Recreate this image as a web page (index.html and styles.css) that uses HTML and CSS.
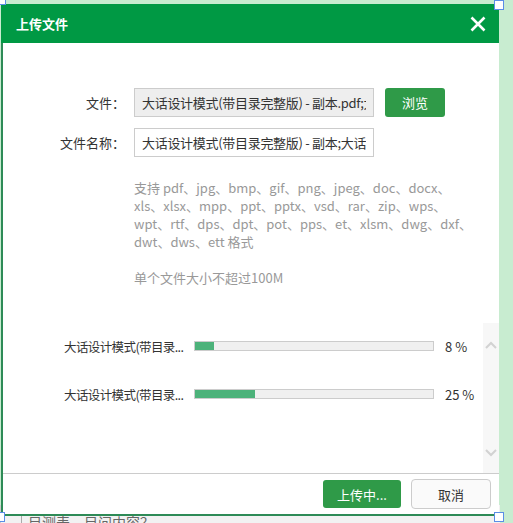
FILE: index.html
```html
<!DOCTYPE html>
<html lang="zh-CN">
<head>
    <meta charset="UTF-8">
    <meta name="viewport" content="width=device-width, initial-scale=1.0">
    <title>上传文件</title>
    <link rel="stylesheet" href="styles.css">
</head>
<body>

    <div class="under">
        <span class="under-text">目测表、目问内容？</span>
    </div>

    <div class="dialog">
        <div class="dialog-head">
            <span class="dialog-title">上传文件</span>
            <svg class="close" width="16" height="16" viewBox="0 0 16 16">
                <path d="M1.5 1.5 L14.5 14.5 M14.5 1.5 L1.5 14.5" stroke="#fff" stroke-width="2.6" fill="none"/>
            </svg>
        </div>

        <div class="dialog-body">
            <div class="form-row">
                <label class="form-label">文件：</label>
                <input class="field field-file" type="text" value="大话设计模式(带目录完整版) - 副本.pdf;大话设计模式(带目录完整版).pdf" readonly>
                <button class="btn btn-green btn-browse">浏览</button>
            </div>
            <div class="form-row">
                <label class="form-label">文件名称：</label>
                <input class="field" type="text" value="大话设计模式(带目录完整版) - 副本;大话设计模式(带目录完整版)">
            </div>

            <div class="help">
                <p>支持 pdf、jpg、bmp、gif、png、jpeg、doc、docx、<br>xls、xlsx、mpp、ppt、pptx、vsd、rar、zip、wps、<br>wpt、rtf、dps、dpt、pot、pps、et、xlsm、dwg、dxf、<br>dwt、dws、ett 格式</p>
                <p class="limit">单个文件大小不超过100M</p>
            </div>

            <div class="upload-list">
                <div class="upload-items">
                    <div class="upload-item">
                        <span class="upload-name">大话设计模式(带目录...</span>
                        <div class="bar"><div class="bar-fill" style="width: 8%"></div></div>
                        <span class="upload-pct">8 %</span>
                    </div>
                    <div class="upload-item">
                        <span class="upload-name">大话设计模式(带目录...</span>
                        <div class="bar"><div class="bar-fill" style="width: 25%"></div></div>
                        <span class="upload-pct">25 %</span>
                    </div>
                </div>
                <div class="scrollbar">
                    <svg width="12" height="8" viewBox="0 0 12 8">
                        <path d="M1 7 L6 2 L11 7" stroke="#d2d2d2" stroke-width="2" fill="none"/>
                    </svg>
                    <svg width="12" height="8" viewBox="0 0 12 8">
                        <path d="M1 1 L6 6 L11 1" stroke="#d2d2d2" stroke-width="2" fill="none"/>
                    </svg>
                </div>
            </div>
        </div>

        <div class="dialog-foot">
            <button class="btn btn-green btn-upload">上传中...</button>
            <button class="btn btn-cancel">取消</button>
        </div>

        <span class="handle handle-tl"></span>
        <span class="handle handle-tr"></span>
        <span class="handle handle-bl"></span>
        <span class="handle handle-br"></span>
    </div>

</body>
</html>
```

FILE: styles.css
```css
body {
    margin: 0;
    width: 513px;
    height: 523px;
    overflow: hidden;
    position: relative;
    background-color: #c8ecd0;
    font-family: "Noto Sans CJK SC", "Liberation Sans", sans-serif;
    font-size: 13px;
    color: #333;
}
.under {
    position: absolute;
    left: 0;
    top: 505px;
    width: 499px;
    height: 18px;
    background-color: #f2f2f2;
    border-left: 1px solid #ccc;
}
.under-text {
    position: absolute;
    left: 20px;
    top: 8px;
    font-size: 14px;
    color: #666;
    line-height: 18px;
    border-left: 1px solid #aaa;
    padding-left: 6px;
}
.dialog {
    position: absolute;
    left: 1px;
    top: 4px;
    width: 496px;
    height: 510px;
    background-color: #fff;
    border-left: 2px solid #2e8b57;
    border-bottom: 2px solid #2e8b57;
    display: flex;
    flex-direction: column;
}
.dialog-head {
    height: 39px;
    margin-left: -2px;
    background-color: #009944;
    display: flex;
    align-items: center;
    justify-content: space-between;
    padding: 0 13px 0 15px;
}
.dialog-title {
    color: #fff;
    font-weight: bold;
    font-size: 13px;
}
.close {
    display: block;
}
.dialog-body {
    flex: 1;
    display: flex;
    flex-direction: column;
    padding-top: 45px;
}
.form-row {
    display: flex;
    align-items: center;
    margin-bottom: 11px;
}
.form-label {
    width: 122px;
    text-align: right;
    margin-right: 9px;
    color: #333;
}
.field {
    box-sizing: border-box;
    width: 240px;
    height: 29px;
    border: 1px solid #ccc;
    padding: 0 7px;
    font-family: inherit;
    font-size: 13px;
    letter-spacing: -0.3px;
    color: #333;
    background-color: #fff;
    outline: none;
}
.field-file {
    background-color: #eee;
}
.btn {
    box-sizing: border-box;
    font-family: inherit;
    font-size: 13px;
    border-radius: 3px;
    cursor: pointer;
}
.btn-green {
    background-color: #2f9a48;
    color: #fff;
    border: none;
}
.btn-browse {
    width: 60px;
    height: 29px;
    margin-left: 11px;
}
.help {
    margin-left: 131px;
    margin-top: 11px;
    color: #999;
    line-height: 18px;
}
.help p {
    margin: 0;
}
.help .limit {
    margin-top: 18px;
}
.upload-list {
    margin-top: 36px;
    flex: 1;
    display: flex;
}
.upload-items {
    flex: 1;
    padding-top: 13px;
}
.upload-item {
    display: flex;
    align-items: center;
    height: 20px;
    margin-bottom: 28px;
    padding-left: 61px;
}
.upload-name {
    width: 120px;
    flex-shrink: 0;
    margin-right: 10px;
    white-space: nowrap;
    font-size: 12.5px;
    letter-spacing: -0.6px;
}
.bar {
    box-sizing: border-box;
    width: 240px;
    height: 10px;
    border: 1px solid #ccc;
    background-color: #f0f0f0;
}
.bar-fill {
    height: 100%;
    background-color: #4cb27a;
}
.upload-pct {
    margin-left: 11px;
}
.scrollbar {
    width: 16px;
    background-color: #f7f7f7;
    display: flex;
    flex-direction: column;
    align-items: center;
    justify-content: space-between;
    padding: 18px 0 16px;
}
.dialog-foot {
    height: 40px;
    border-top: 1px solid #ccc;
    display: flex;
    align-items: center;
    justify-content: flex-end;
    padding-right: 8px;
    gap: 10px;
}
.btn-upload {
    width: 78px;
    height: 28px;
}
.btn-cancel {
    width: 80px;
    height: 30px;
    background-color: #fafafa;
    border: 1px solid #ccc;
    color: #333;
    border-radius: 4px;
}
.handle {
    position: absolute;
    width: 8px;
    height: 8px;
    background-color: #fff;
    border: 1px solid #5b8ee6;
}
.handle-tl {
    left: -7px;
    top: -9px;
}
.handle-tr {
    right: -5px;
    top: -4px;
}
.handle-bl {
    left: -8px;
    bottom: -8px;
}
.handle-br {
    right: -5px;
    bottom: -8px;
}
```
